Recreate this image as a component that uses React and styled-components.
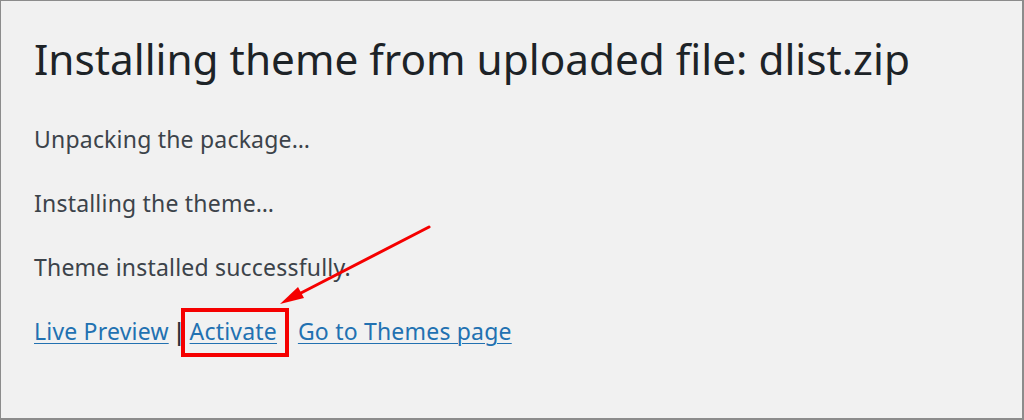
import React from "react";
import styled, { createGlobalStyle } from "styled-components";

const Global = createGlobalStyle`
  html, body { margin: 0; padding: 0; background: #f1f1f1; }
  body { font-family: "Noto Sans", "Open Sans", sans-serif; }
`;

const Frame = styled.div`
  position: relative;
  box-sizing: border-box;
  width: 1024px;
  height: 420px;
  background: #f1f1f1;
  border-top: 1px solid #8c8c8c;
  border-left: 1px solid #8c8c8c;
  border-right: 2px solid #8c8c8c;
  border-bottom: 2px solid #8c8c8c;
  padding: 32px 0 0 33px;
  display: flex;
  flex-direction: column;
  overflow: hidden;
`;

const Title = styled.h1`
  margin: 0 0 38px;
  font-size: 42.3px;
  line-height: 52px;
  font-weight: 400;
  color: #1d2327;
  white-space: nowrap;
`;

const Line = styled.p`
  margin: 0 0 32px;
  font-size: 23px;
  letter-spacing: 0.2px;
  line-height: 32px;
  color: #3c434a;
  white-space: nowrap;
`;

const Link = styled.a`
  color: #2271b1;
  text-decoration: underline;
  text-underline-offset: 3px;
  text-decoration-thickness: 1px;
  cursor: pointer;
`;

const Sep = styled.span`
  display: inline-block;
  margin: 0 4px 0 4px;
  color: #2c3338;
  font-weight: 600;
`;

const Marked = styled.span`
  position: relative;
`;

const RedBox = styled.span`
  position: absolute;
  left: ${(p) => p.$l}px;
  right: ${(p) => p.$r}px;
  top: ${(p) => p.$t}px;
  bottom: ${(p) => p.$b}px;
  border: 4px solid #f50000;
  pointer-events: none;
`;

const Arrow = styled.svg`
  position: absolute;
  left: 0;
  top: 0;
  pointer-events: none;
`;

export default function App() {
  return (
    <>
      <Global />
      <Frame>
        <Title>Installing theme from uploaded file: dlist.zip</Title>
        <Line>Unpacking the package…</Line>
        <Line>Installing the theme…</Line>
        <Line>Theme installed successfully.</Line>
        <Line>
          <Link>Live Preview</Link>
          <Sep>|</Sep>
          <Marked>
            <Link>Activate</Link>
            <RedBox $l={-9} $r={-12} $t={-7} $b={-10} />
          </Marked>
          <Sep>|</Sep>
          <Link>Go to Themes page</Link>
        </Line>
        <Arrow width="1024" height="420" viewBox="0 0 1024 420">
          <line x1="428" y1="226" x2="298" y2="293" stroke="#f50000" strokeWidth="3" strokeLinecap="round" />
          <polygon points="279,303 297,286 303,297" fill="#f50000" />
        </Arrow>
      </Frame>
    </>
  );
}
